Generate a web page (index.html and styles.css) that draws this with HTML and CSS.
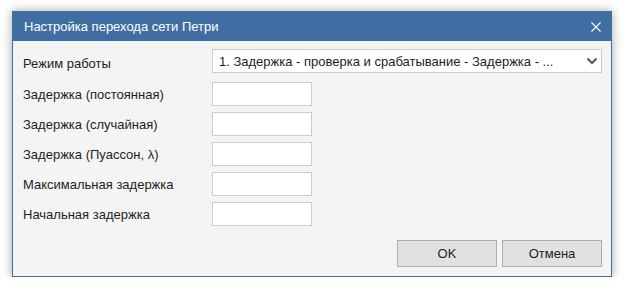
FILE: index.html
```html
<!DOCTYPE html>
<html lang="ru">
<head>
    <meta charset="UTF-8">
    <title>Настройка перехода сети Петри</title>
    <link rel="stylesheet" href="styles.css">
</head>
<body>
<div class="dialog">
    <div class="titlebar">
        <span class="title">Настройка перехода сети Петри</span>
        <svg class="close" width="10" height="10" viewBox="0 0 10 10">
            <path d="M0.5 0.5 L9.5 9.5 M9.5 0.5 L0.5 9.5" stroke="#fff" stroke-width="1.1" fill="none"/>
        </svg>
    </div>
    <div class="content">
        <div class="row row-mode">
            <label class="label">Режим работы</label>
            <div class="select">
                <span class="select-text">1. Задержка - проверка и срабатывание - Задержка - ...</span>
                <svg class="chevron" width="12" height="8" viewBox="0 0 12 8">
                    <path d="M1.5 1.5 L6 6 L10.5 1.5" stroke="#555" stroke-width="2" fill="none"/>
                </svg>
            </div>
        </div>
        <div class="row">
            <label class="label">Задержка (постоянная)</label>
            <input class="field" type="text">
        </div>
        <div class="row">
            <label class="label">Задержка (случайная)</label>
            <input class="field" type="text">
        </div>
        <div class="row">
            <label class="label">Задержка (Пуассон, λ)</label>
            <input class="field" type="text">
        </div>
        <div class="row">
            <label class="label">Максимальная задержка</label>
            <input class="field" type="text">
        </div>
        <div class="row">
            <label class="label">Начальная задержка</label>
            <input class="field" type="text">
        </div>
        <div class="footer">
            <button class="btn">OK</button>
            <button class="btn">Отмена</button>
        </div>
    </div>
</div>
</body>
</html>
```

FILE: styles.css
```css
*{
    padding: 0;
    margin: 0;
    box-sizing: border-box;
}
body{
    background: #fff;
    font-family: "Liberation Sans", Arial, sans-serif;
    font-size: 13px;
    color: #1e1e1e;
}
.dialog{
    width: 600px;
    height: 266px;
    margin: 11px 0 0 12px;
    border: 1px solid #3f6ea2;
    background: #f4f4f4;
    box-shadow: 0 0 10px rgba(0, 0, 0, .35);
    display: flex;
    flex-direction: column;
}
.titlebar{
    height: 29px;
    background: #3f6ea2;
    color: #fff;
    display: flex;
    align-items: center;
    justify-content: space-between;
    padding: 0 10px 0 11px;
}
.title{
    font-size: 13px;
}
.content{
    flex: 1;
    display: flex;
    flex-direction: column;
    padding: 8px 9px 9px 10px;
}
.row{
    display: flex;
    align-items: center;
    margin-bottom: 6px;
}
.row-mode{
    align-items: flex-start;
    margin-bottom: 9px;
}
.row-mode .label{
    padding-top: 7px;
}
.label{
    width: 189px;
}
.select{
    flex: 1;
    height: 24px;
    background: #fff;
    border: 1px solid #ccc;
    display: flex;
    align-items: center;
    justify-content: space-between;
    padding: 0 3px 0 6px;
}
.select-text{
    white-space: nowrap;
}
.field{
    width: 100px;
    height: 24px;
    background: #fff;
    border: 1px solid #ccc;
    font: inherit;
    outline: none;
}
.footer{
    margin-top: auto;
    display: flex;
    justify-content: flex-end;
    gap: 5px;
}
.btn{
    width: 100px;
    height: 27px;
    background: #e1e1e1;
    border: 1px solid #adadad;
    font: inherit;
    color: #1e1e1e;
}
```
